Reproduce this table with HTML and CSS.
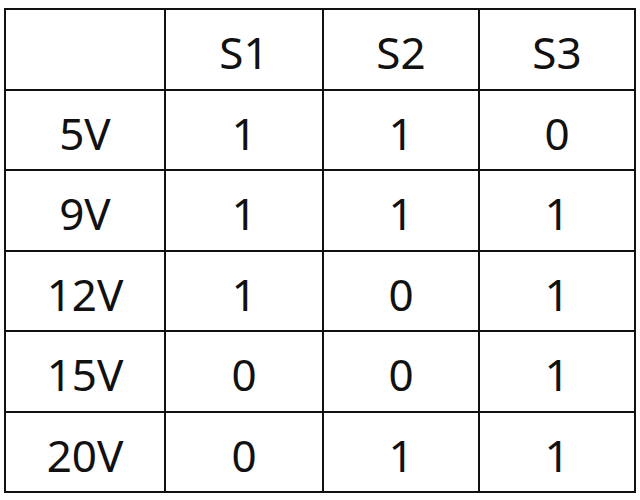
FILE: index.html
```html
<!DOCTYPE html>
<html lang="en">
<head>
    <meta charset="UTF-8">
    <title>Voltage Switch Table</title>
    <link rel="stylesheet" href="styles.css">
</head>
<body>
    <table class="volt-table">
        <colgroup>
            <col class="col-label">
            <col class="col-s1">
            <col class="col-s2">
            <col class="col-s3">
        </colgroup>
        <tr>
            <td></td>
            <td>S1</td>
            <td>S2</td>
            <td>S3</td>
        </tr>
        <tr>
            <td>5V</td>
            <td>1</td>
            <td>1</td>
            <td>0</td>
        </tr>
        <tr>
            <td>9V</td>
            <td>1</td>
            <td>1</td>
            <td>1</td>
        </tr>
        <tr>
            <td>12V</td>
            <td>1</td>
            <td>0</td>
            <td>1</td>
        </tr>
        <tr>
            <td>15V</td>
            <td>0</td>
            <td>0</td>
            <td>1</td>
        </tr>
        <tr>
            <td>20V</td>
            <td>0</td>
            <td>1</td>
            <td>1</td>
        </tr>
    </table>
</body>
</html>
```

FILE: styles.css
```css
* {
    margin: 0;
    padding: 0;
    box-sizing: border-box;
}

body {
    background: #fff;
    font-family: 'Noto Sans', 'Open Sans', sans-serif;
    color: #111;
}

.volt-table {
    margin: 8px 0 0 4px;
    border-collapse: collapse;
    table-layout: fixed;
    width: 630px;
}

.col-label { width: 160px; }
.col-s1 { width: 158px; }
.col-s2 { width: 156px; }
.col-s3 { width: 156px; }

.volt-table td {
    border: 2px solid #111;
    height: 80.5px;
    padding-top: 6px;
    text-align: center;
    vertical-align: middle;
    font-size: 44px;
    line-height: 1;
}
```
